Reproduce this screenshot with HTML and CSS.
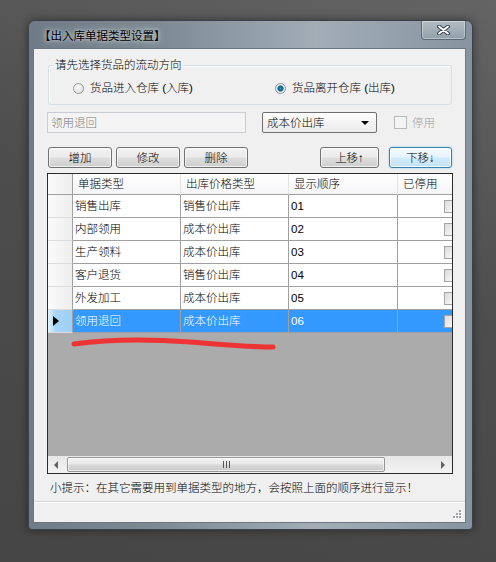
FILE: index.html
```html
<!DOCTYPE html>
<html lang="zh-CN">
<head>
    <meta charset="UTF-8">
    <title>出入库单据类型设置</title>
    <link rel="stylesheet" href="styles.css">
</head>
<body>
    <div class="window">
        <div class="titlebar">
            <span class="title">【出入库单据类型设置】</span>
            <span class="close">
                <svg width="13" height="10" viewBox="0 0 13 10">
                    <path d="M2 1.5 L11 8.5 M11 1.5 L2 8.5" stroke="#3d4650" stroke-width="4" stroke-linecap="round"/>
                    <path d="M2 1.5 L11 8.5 M11 1.5 L2 8.5" stroke="#ffffff" stroke-width="2" stroke-linecap="round"/>
                </svg>
            </span>
        </div>
        <div class="client">
            <fieldset class="group">
                <legend>请先选择货品的流动方向</legend>
                <div class="radio-row">
                    <label class="radio first"><span class="dot"></span>货品进入仓库 (入库)</label>
                    <label class="radio checked"><span class="dot"></span>货品离开仓库 (出库)</label>
                </div>
            </fieldset>

            <div class="edit-row">
                <div class="textbox">领用退回</div>
                <div class="combo">成本价出库<span class="arrow"></span></div>
                <label class="check"><span class="box"></span>停用</label>
            </div>

            <div class="btn-row">
                <button class="btn">增加</button>
                <button class="btn">修改</button>
                <button class="btn">删除</button>
                <button class="btn up">上移↑</button>
                <button class="btn down focus">下移↓</button>
            </div>

            <div class="grid">
                <div class="grid-body">
                    <table>
                        <colgroup>
                            <col class="c-hdr"><col class="c-1"><col class="c-2"><col class="c-3"><col class="c-4">
                        </colgroup>
                        <tr class="head">
                            <th class="rowhdr"></th>
                            <th>单据类型</th>
                            <th>出库价格类型</th>
                            <th>显示顺序</th>
                            <th>已停用</th>
                        </tr>
                        <tr>
                            <td class="rowhdr"></td><td>销售出库</td><td>销售价出库</td><td>01</td><td class="cb"><span class="cell-box"></span></td>
                        </tr>
                        <tr>
                            <td class="rowhdr"></td><td>内部领用</td><td>成本价出库</td><td>02</td><td class="cb"><span class="cell-box"></span></td>
                        </tr>
                        <tr>
                            <td class="rowhdr"></td><td>生产领料</td><td>成本价出库</td><td>03</td><td class="cb"><span class="cell-box"></span></td>
                        </tr>
                        <tr>
                            <td class="rowhdr"></td><td>客户退货</td><td>销售价出库</td><td>04</td><td class="cb"><span class="cell-box"></span></td>
                        </tr>
                        <tr>
                            <td class="rowhdr"></td><td>外发加工</td><td>成本价出库</td><td>05</td><td class="cb"><span class="cell-box"></span></td>
                        </tr>
                        <tr class="selected">
                            <td class="rowhdr"><span class="pointer"></span></td><td>领用退回</td><td>成本价出库</td><td>06</td><td class="cb"><span class="cell-box"></span></td>
                        </tr>
                    </table>
                </div>
                <div class="hscroll">
                    <span class="sarrow left"></span>
                    <div class="thumb"><span class="grip-lines"></span></div>
                    <span class="sarrow right"></span>
                </div>
            </div>

            <p class="tip">小提示：在其它需要用到单据类型的地方，会按照上面的顺序进行显示！</p>

            <div class="statusbar">
                <svg class="sizegrip" width="11" height="11" viewBox="0 0 11 11">
                    <g fill="#ffffff">
                        <rect x="9" y="2" width="2" height="2"/><rect x="6" y="5" width="2" height="2"/><rect x="9" y="5" width="2" height="2"/>
                        <rect x="3" y="8" width="2" height="2"/><rect x="6" y="8" width="2" height="2"/><rect x="9" y="8" width="2" height="2"/>
                    </g>
                    <g fill="#a0a4a8">
                        <rect x="8" y="1" width="2" height="2"/><rect x="5" y="4" width="2" height="2"/><rect x="8" y="4" width="2" height="2"/>
                        <rect x="2" y="7" width="2" height="2"/><rect x="5" y="7" width="2" height="2"/><rect x="8" y="7" width="2" height="2"/>
                    </g>
                </svg>
            </div>
        </div>
    </div>

    <!-- red marker stroke drawn over the screenshot -->
    <svg class="marker" width="496" height="562" viewBox="0 0 496 562">
        <path d="M74 344 C 110 339, 150 339, 190 342 S 250 347, 273 347" fill="none" stroke="#ee3334" stroke-width="5" stroke-linecap="round"/>
    </svg>
</body>
</html>
```

FILE: styles.css
```css
* {
    box-sizing: border-box;
}
body {
    margin: 0;
    width: 496px;
    height: 562px;
    padding: 20px 0 0 28px;
    background: linear-gradient(200deg, #646464 0%, #4d4d4d 45%, #454545 100%);
    font-family: "Liberation Sans", "Noto Sans CJK SC", sans-serif;
    font-size: 11.5px;
    font-weight: 300;
    line-height: 14px;
    color: #000;
    overflow: hidden;
}
.window {
    width: 445px;
    height: 510px;
    border: 1px solid #3a434b;
    border-radius: 7px 7px 4px 4px;
    background: linear-gradient(to right, #6f7c87 0%, #7e8b95 30%, #a2adb6 65%, #8794a0 100%);
    box-shadow: 0 0 8px rgba(0, 0, 0, 0.45);
    display: flex;
    flex-direction: column;
}
.titlebar {
    height: 27px;
    display: flex;
    justify-content: space-between;
    align-items: flex-start;
}
.title {
    margin: 8px 0 0 10px;
    font-weight: 400;
    text-shadow: 0 0 6px #d0d7dc, 0 0 3px #d0d7dc;
}
.close {
    width: 45px;
    height: 19px;
    margin-right: 6px;
    border: 1px solid #5d6a75;
    border-top: none;
    border-radius: 0 0 4px 4px;
    background: linear-gradient(#b3bdc5, #929fa9);
    box-shadow: inset 0 0 0 1px rgba(255, 255, 255, 0.35);
    display: flex;
    justify-content: center;
    align-items: center;
}
.client {
    height: 475px;
    margin: 0 6px 0 4px;
    border: 1px solid #6b7782;
    background: #f0f0f0;
    display: flex;
    flex-direction: column;
}

/* group box */
.group {
    margin: 9px 0 0 14px;
    width: 404px;
    padding: 0;
    border: 1px solid #d5dfe5;
    border-radius: 3px;
    box-shadow: inset 1px 1px 0 #fff;
}
.group legend {
    margin-left: 5px;
    padding: 0 1px;
    line-height: 14px;
}
.radio-row {
    display: flex;
    align-items: center;
    height: 20px;
    margin: 6px 0 6px 24px;
}
.radio {
    display: flex;
    align-items: center;
}
.radio.first {
    width: 202px;
}
.dot {
    width: 11px;
    height: 11px;
    margin-right: 6px;
    border-radius: 50%;
    border: 1px solid #9a9a9a;
    background: radial-gradient(circle at 40% 35%, #fafafa, #d8d8d8);
}
.radio.checked .dot {
    border-color: #8c9aa5;
    background: radial-gradient(circle at 50% 50%, #2a8fb6 0, #145f80 2.5px, #e6eef3 3.6px, #dfe5ea 100%);
}

/* edit row */
.edit-row {
    display: flex;
    align-items: center;
    height: 21px;
    margin: 7px 0 0 13px;
}
.textbox {
    width: 199px;
    height: 21px;
    padding: 3px 3px 0;
    border: 1px solid #c9ccd0;
    background: #f4f4f4;
    color: #7b7b7b;
}
.combo {
    width: 115px;
    height: 21px;
    margin-left: 16px;
    padding: 3px 4px 0;
    border: 1px solid #707070;
    border-radius: 2px;
    background: linear-gradient(#fdfdfd, #ececec);
    position: relative;
}
.combo .arrow {
    position: absolute;
    right: 7px;
    top: 8px;
    border-left: 4px solid transparent;
    border-right: 4px solid transparent;
    border-top: 4px solid #000;
}
.check {
    display: flex;
    align-items: center;
    margin-left: 17px;
    color: #a3a3a3;
}
.check .box {
    width: 13px;
    height: 13px;
    margin-right: 5px;
    border: 1px solid #b9b9b9;
    background: #f4f4f4;
}

/* buttons */
.btn-row {
    display: flex;
    height: 21px;
    margin: 14px 0 0 14px;
}
.btn {
    width: 64px;
    height: 21px;
    margin: 0 4px 0 0;
    padding: 0;
    font: inherit;
    line-height: 14px;
    color: #000;
    border: 1px solid #707070;
    border-radius: 3px;
    background: linear-gradient(#f2f2f2 0%, #ebebeb 49%, #dddddd 51%, #cfcfcf 100%);
    box-shadow: inset 0 0 0 1px rgba(255, 255, 255, 0.7);
}
.btn.up {
    width: 59px;
    margin-left: 68px;
    margin-right: 10px;
}
.btn.down {
    width: 63px;
}
.btn.focus {
    border-color: #3c7fb1;
    background: linear-gradient(#f4fafe 0%, #e6f3fb 49%, #d3ebf9 51%, #c4e3f6 100%);
    box-shadow: inset 0 0 0 1px rgba(255, 255, 255, 0.8), 0 0 2px #7ec3ee;
}

/* data grid */
.grid {
    width: 406px;
    height: 301px;
    margin: 5px 0 0 13px;
    border: 1px solid #2b2b2b;
    background: #ababab;
    display: flex;
    flex-direction: column;
}
.grid-body {
    flex: 1;
    overflow: hidden;
}
table {
    table-layout: fixed;
    width: 457px;
    border-collapse: separate;
    border-spacing: 0;
}
col.c-hdr { width: 25px; }
col.c-1 { width: 108px; }
col.c-2 { width: 108px; }
col.c-3 { width: 109px; }
col.c-4 { width: 107px; }
th, td {
    padding: 0 0 0 2px;
    text-align: left;
    white-space: nowrap;
    overflow: hidden;
    font-weight: 300;
    vertical-align: middle;
}
tr {
    height: 23px;
}
tr.head {
    height: 21px;
}
th {
    padding-left: 5px;
    background: linear-gradient(#ffffff, #f4f5f7);
    border-right: 1px solid #e3e4e6;
    border-bottom: 1px solid #a0a0a0;
}
td {
    background: #fff;
    border-right: 1px solid #a0a0a0;
    border-bottom: 1px solid #a0a0a0;
}
.rowhdr {
    padding: 0;
    background: linear-gradient(to right, #fbfbfb, #eeeeee);
    border-right: 1px solid #a0a0a0;
    border-bottom: 1px solid #dcdcdc;
}
th.rowhdr {
    border-bottom: 1px solid #a0a0a0;
}
td.cb {
    padding-left: 46px;
}
.cell-box {
    display: block;
    width: 13px;
    height: 13px;
    border: 1px solid #a4a4a4;
    background: linear-gradient(135deg, #dcdcdc, #fbfbfb);
}
tr.selected td {
    background: #3399ff;
    color: #fff;
}
tr.selected td.rowhdr {
    background: linear-gradient(to right, #e4f2fd, #a9d5f6 30%, #9ccff5);
}
.pointer {
    display: block;
    margin-left: 5px;
    width: 0;
    height: 0;
    border-top: 5px solid transparent;
    border-bottom: 5px solid transparent;
    border-left: 6px solid #000;
}
.hscroll {
    height: 17px;
    background: linear-gradient(#e7e7e7, #f3f3f3);
    display: flex;
    align-items: center;
}
.sarrow {
    width: 0;
    height: 0;
    border-top: 4px solid transparent;
    border-bottom: 4px solid transparent;
}
.sarrow.left {
    margin-left: 6px;
    border-right: 4px solid #606060;
}
.sarrow.right {
    margin-left: 56px;
    border-left: 4px solid #606060;
}
.thumb {
    width: 318px;
    height: 15px;
    margin-left: 9px;
    border: 1px solid #979797;
    border-radius: 2px;
    background: linear-gradient(#f3f3f3 0%, #e9e9e9 49%, #d9d9d9 51%, #cbcbcb 100%);
    box-shadow: inset 0 0 0 1px rgba(255, 255, 255, 0.6);
    display: flex;
    justify-content: center;
    align-items: center;
}
.grip-lines {
    width: 7px;
    height: 7px;
    background: repeating-linear-gradient(to right, #555 0, #555 1px, transparent 1px, transparent 3px);
}

/* footer */
.tip {
    margin: 7px 0 0 16px;
    line-height: 14px;
}
.statusbar {
    height: 21px;
    margin-top: 6px;
    border-top: 1px solid #d5d5d5;
    box-shadow: inset 0 1px 0 #fff;
    display: flex;
    justify-content: flex-end;
    align-items: flex-end;
    padding: 0 3px 2px 0;
}
.marker {
    position: absolute;
    top: 0;
    left: 0;
    pointer-events: none;
}
```
